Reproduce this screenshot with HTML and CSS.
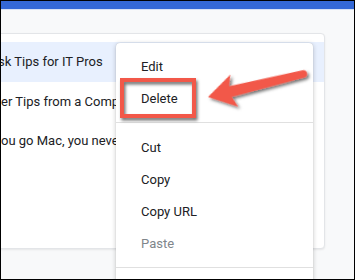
FILE: index.html
```html
<!DOCTYPE html>
<html>
<head>
<meta charset="utf-8">
<link rel="stylesheet" href="styles.css">
</head>
<body>
<div class="frame">
  <div class="topbar"></div>
  <div class="topline"></div>
  <div class="content">
    <div class="card">
      <div class="row selected"><span class="title t1">sk Tips for IT Pros</span></div>
      <div class="row"><span class="title">er Tips from a Computer Geek</span></div>
      <div class="row"><span class="title">ou go Mac, you never go back</span></div>
      <div class="row"></div>
      <div class="row short"></div>
    </div>
  </div>

  <div class="menu">
    <div class="item">Edit</div>
    <div class="item">Delete</div>
    <div class="sep"></div>
    <div class="item">Cut</div>
    <div class="item">Copy</div>
    <div class="item">Copy URL</div>
    <div class="item disabled">Paste</div>
    <div class="sep"></div>
  </div>

  <svg class="annot" width="355" height="280" viewBox="0 0 355 280">
    <defs>
      <filter id="sh" x="-20%" y="-20%" width="140%" height="160%">
        <feDropShadow dx="1.5" dy="2.5" stdDeviation="1.5" flood-color="#000" flood-opacity="0.55"/>
      </filter>
    </defs>
    <rect x="122" y="80" width="72" height="36" fill="none" stroke="#f2584a" stroke-width="4" filter="url(#sh)"/>
    <path d="M0 0 L27 -16.5 L23 -5.5 L98 -3.8 A3.8 3.8 0 0 1 98 3.8 L23 5.5 L27 16.5 Z"
          transform="translate(208 97) rotate(-13.6)" fill="#f2584a" filter="url(#sh)"/>
  </svg>
</div>
</body>
</html>
```

FILE: styles.css
```css
* { box-sizing: border-box; }
html, body { margin: 0; padding: 0; }
body {
  width: 355px;
  height: 280px;
  overflow: hidden;
  font-family: Roboto, "Liberation Sans", sans-serif;
  background: #000;
}
.frame {
  position: relative;
  width: 355px;
  height: 280px;
  border: 1px solid #000;
  background: #f8f9fa;
  overflow: hidden;
}
.topbar {
  height: 8px;
  background: #3468d6;
}
.topline {
  height: 1px;
  background: #d7e1f4;
}
.content {
  padding-top: 23px;
}
.card {
  margin-left: -20px;
  width: 344px;
  height: 216px;
  background: #fff;
  border: 1px solid #e3e5e8;
  border-radius: 4px;
  box-shadow: 0 1px 2px rgba(0,0,0,0.08);
  padding-top: 8px;
  overflow: hidden;
}
.row {
  height: 39.5px;
  display: flex;
  align-items: center;
  padding-left: 19px;
  font-size: 13px;
  color: #202124;
  white-space: nowrap;
  overflow: hidden;
}
.row.selected {
  background: #e8f0fe;
}
.t1 { margin-left: -3px; }
.menu {
  position: absolute;
  left: 115px;
  top: 42px;
  width: 197px;
  height: 260px;
  background: #fff;
  border-radius: 4px;
  box-shadow: 0 1px 5px rgba(0,0,0,0.22), 0 0 1px rgba(0,0,0,0.2);
  padding-top: 7px;
}
.item {
  height: 32px;
  display: flex;
  align-items: center;
  padding-left: 25px;
  font-size: 13px;
  color: #202124;
}
.item.disabled { color: #80868b; }
.sep {
  height: 1px;
  background: #e0e0e0;
  margin: 8px 0;
}
.annot {
  position: absolute;
  left: -1px;
  top: -1px;
}
```
